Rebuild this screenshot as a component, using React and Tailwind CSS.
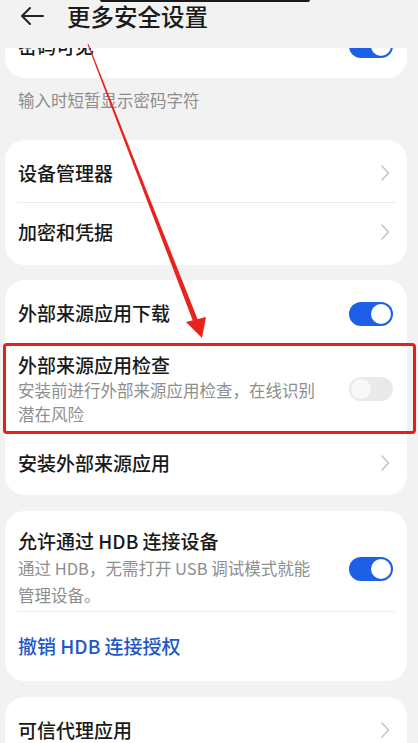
const font = "font-['Noto_Sans_CJK_SC','Noto_Sans',sans-serif]"

function Toggle({ on }) {
  return (
    <div
      className={`w-[44px] h-[24px] rounded-full p-[2px] flex shrink-0 ${
        on ? 'bg-[#1d5fe6] justify-end' : 'bg-[#e9e9e9] justify-start'
      }`}
    >
      <div className={`w-[20px] h-[20px] rounded-full ${on ? 'bg-white' : 'bg-[#f8f8f8]'}`} />
    </div>
  )
}

function Chevron() {
  return (
    <svg width="10" height="18" viewBox="0 0 10 18" className="shrink-0 mr-[17px]">
      <path d="M2 2l6.5 7L2 16" fill="none" stroke="#c6c6c6" strokeWidth="1.6" strokeLinecap="round" strokeLinejoin="round" />
    </svg>
  )
}

function Divider() {
  return <div className="mx-[12px] h-px bg-[#ececec]" />
}

function Card({ className = '', children }) {
  return <div className={`ml-[5px] mr-[11px] bg-white rounded-[20px] ${className}`}>{children}</div>
}

function LinkRow({ label }) {
  return (
    <div className="h-[58px] flex items-center justify-between pl-[13px]">
      <span className="text-[19px] font-medium text-[#191919]">{label}</span>
      <Chevron />
    </div>
  )
}

function ToggleRow({ label, on }) {
  return (
    <div className="h-[59px] flex items-center justify-between pl-[13px] pr-[14px]">
      <span className="text-[19px] font-medium text-[#191919]">{label}</span>
      <Toggle on={on} />
    </div>
  )
}

export default function App() {
  return (
    <div className={`relative w-[418px] h-[743px] overflow-hidden bg-[#f2f2f2] ${font}`}>
      {/* header */}
      <div className="relative z-10 h-[48px] bg-[#f2f2f2]">
        <div className="h-[32px] flex items-center">
          <svg width="26" height="24" viewBox="0 0 26 24" className="ml-[19px]">
            <path d="M3 12h21M11 4l-8 8 8 8" fill="none" stroke="#222" strokeWidth="2" strokeLinecap="round" strokeLinejoin="round" />
          </svg>
          <span className="ml-[22px] text-[23.5px] font-medium text-[#1a1a1a] leading-[32px]">更多安全设置</span>
        </div>
      </div>

      {/* partially scrolled card */}
      <Card className="-mt-[30px] pb-[4px]">
        <div className="h-[56px] flex items-center justify-between pl-[13px] pr-[14px]">
          <span className="text-[19px] font-medium text-[#191919]">密码可见</span>
          <Toggle on />
        </div>
      </Card>

      <p className="pt-[10px] pl-[18px] text-[16.5px] leading-[24px] text-[#8e8e8e]">输入时短暂显示密码字符</p>

      <Card className="mt-[28px] py-[4px]">
        <LinkRow label="设备管理器" />
        <Divider />
        <LinkRow label="加密和凭据" />
      </Card>

      <Card className="mt-[15px] pt-[4px] pb-[3px]">
        <ToggleRow label="外部来源应用下载" on />
        <div className="flex items-center justify-between pl-[13px] pr-[14px] pt-[9px] pb-[8px]">
          <div>
            <div className="text-[19px] font-medium leading-[26px] text-[#191919]">外部来源应用检查</div>
            <div className="text-[16.5px] leading-[24px] text-[#8e8e8e] w-[310px]">
              安装前进行外部来源应用检查，在线识别
              <br />
              潜在风险
            </div>
          </div>
          <Toggle on={false} />
        </div>
        <LinkRow label="安装外部来源应用" />
      </Card>

      <Card className="mt-[16px]">
        <div className="flex items-center justify-between pl-[13px] pr-[14px] pt-[17px] pb-[2px]">
          <div>
            <div className="text-[19px] font-medium leading-[26px] text-[#191919]">允许通过 HDB 连接设备</div>
            <div className="mt-px text-[16.5px] leading-[27px] text-[#8e8e8e] w-[310px]">
              通过 HDB，无需打开 USB 调试模式就能
              <br />
              管理设备。
            </div>
          </div>
          <Toggle on />
        </div>
        <Divider />
        <div className="h-[69px] flex items-center pl-[13px]">
          <span className="text-[19px] font-medium text-[#2257c6]">撤销 HDB 连接授权</span>
        </div>
      </Card>

      <Card className="mt-[16px] pt-[4px]">
        <LinkRow label="可信代理应用" />
      </Card>

      {/* annotation overlays */}
      <div className="absolute z-20 top-0 left-[100px] w-[210px] h-[2px] rounded-b bg-[#1a1a1a]" />
      <div className="absolute z-20 top-[343px] left-[3px] w-[413px] h-[91px] border-[3px] border-[#e2211b] rounded-[4px] pointer-events-none" />
      <svg className="absolute z-20 inset-0 pointer-events-none" width="418" height="743" viewBox="0 0 418 743">
        <polygon points="88.5,44 87.5,44.5 193.7,322.9 198.3,321.1" fill="#e8231c" />
        <polygon points="202,338 186,322 206,317" fill="#e8231c" />
      </svg>
    </div>
  )
}
